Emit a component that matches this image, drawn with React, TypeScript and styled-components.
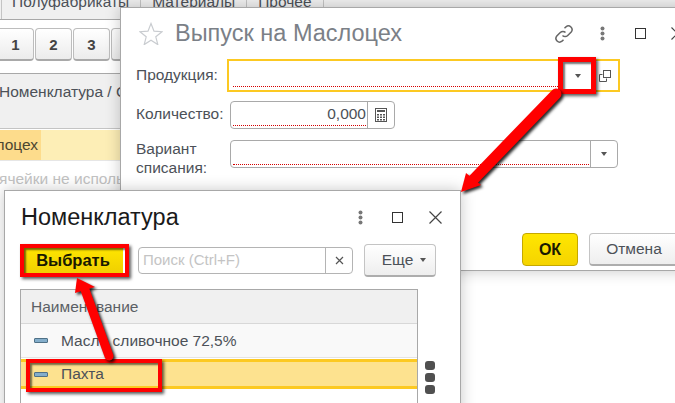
import React from "react";
import styled, { createGlobalStyle } from "styled-components";

const GlobalStyle = createGlobalStyle`
  html, body {
    margin: 0;
    padding: 0;
    background: #fff;
  }
  body {
    font-family: "Liberation Sans", Arial, sans-serif;
    color: #4b4f55;
  }
`;

const Desktop = styled.div`
  position: relative;
  width: 675px;
  height: 403px;
  overflow: hidden;
  background: #fff;
`;

/* background form */
const TabStrip = styled.div`
  display: flex;
  align-items: flex-end;
  height: 19px;
  overflow: hidden;
  background: #f0f0f0;
  border-bottom: 1px solid #a8a8a8;
  padding-left: 1px;
`;

const Tab = styled.div`
  flex: none;
  padding: 0 11px 9px;
  height: 30px;
  border-left: 1px solid #c4c4c4;
  line-height: 17px;
  font-size: 15.5px;
  color: #4c5158;
  box-sizing: border-box;
  display: flex;
  align-items: flex-end;
  &:first-child {
    padding-left: 10px;
  }
`;

const PagerRow = styled.div`
  display: flex;
  gap: 1px;
  margin-top: 8px;
  margin-left: -3px;
`;

const PagerButton = styled.div`
  width: 37px;
  height: 33px;
  box-sizing: border-box;
  display: flex;
  align-items: center;
  justify-content: center;
  border: 1px solid #bdbdbd;
  border-bottom: 2px solid #a9a9a9;
  border-radius: 4px;
  background: linear-gradient(#fff, #ececec);
  font-size: 15px;
  font-weight: bold;
  color: #444;
`;

const ListHead = styled.div`
  margin-top: 12px;
  height: 56px;
  box-sizing: border-box;
  background: #f0f0f0;
  border-top: 1px solid #a8a8a8;
  border-bottom: 1px solid #c4c4c4;
  padding-top: 9px;
  font-size: 15.5px;
  text-indent: -1px;
  white-space: nowrap;
  color: #4c5158;
`;

const ListRow = styled.div`
  margin-top: 1px;
  height: 30px;
  background: #fdeeb6;
  border-bottom: 1px solid #e6e6e6;
`;

const ListCell = styled.div`
  width: 41px;
  height: 30px;
  background: #fddc8c;
  font-size: 15.5px;
  line-height: 29px;
  direction: rtl;
  padding-right: 3px;
  box-sizing: border-box;
  overflow: hidden;
  white-space: nowrap;
  color: #4c4630;
`;

const HintText = styled.div`
  margin-top: 9px;
  margin-left: -1px;
  font-size: 15.5px;
  color: #c2c2c2;
  white-space: nowrap;
`;

/* windows */
const Window = styled.div<{ $left: number; $top: number; $width: number; $height: number }>`
  position: absolute;
  left: ${(p) => p.$left}px;
  top: ${(p) => p.$top}px;
  width: ${(p) => p.$width}px;
  height: ${(p) => p.$height}px;
  box-sizing: border-box;
  display: flex;
  flex-direction: column;
  background: #fff;
  border: 1px solid #a8a8a8;
  box-shadow: 0 0 14px rgba(0, 0, 0, 0.22);
`;

const WindowHeader = styled.div<{ $height: number }>`
  display: flex;
  align-items: center;
  height: ${(p) => p.$height}px;
  flex: none;
`;

const WindowTitle = styled.div<{ $muted?: boolean }>`
  font-size: 23.5px;
  white-space: nowrap;
  color: ${(p) => (p.$muted ? "#7b8087" : "#1a1a1a")};
`;

const TitleSlot = styled.div`
  flex: none;
  margin-left: 12px;
`;

const HeaderIcon = styled.svg<{ $gapLeft: number }>`
  flex: none;
  margin-left: ${(p) => p.$gapLeft}px;
`;

const HeaderSpacer = styled.div`
  flex: 1;
`;

const FormRow = styled.div<{ $top: number }>`
  display: flex;
  align-items: flex-start;
  margin-top: ${(p) => p.$top}px;
  padding-left: 15px;
`;

const FieldLabel = styled.div<{ $width: number; $offset: number }>`
  width: ${(p) => p.$width}px;
  flex: none;
  margin-top: ${(p) => p.$offset}px;
  font-size: 15.5px;
  line-height: 19px;
  color: #4c5158;
  white-space: nowrap;
`;

const FocusField = styled.div`
  width: 393px;
  height: 33px;
  box-sizing: border-box;
  display: flex;
  border: 2px solid #fcc922;
`;

const Field = styled.div<{ $width: number }>`
  width: ${(p) => p.$width}px;
  height: 28px;
  box-sizing: border-box;
  display: flex;
  border: 1px solid #a9a9a9;
  border-radius: 4px;
`;

const FieldValue = styled.div`
  flex: 1;
  display: flex;
  align-items: flex-end;
  justify-content: flex-end;
  padding: 0 1px 2px 2px;
`;

const FocusValue = styled(FieldValue)`
  padding: 0 5px 3px 4px;
`;

const DottedValue = styled.div`
  flex: 1;
  height: 22px;
  box-sizing: border-box;
  border-bottom: 1px dotted #d40000;
  text-align: right;
  font-size: 15.5px;
  line-height: 20px;
  color: #4c5158;
`;

const FieldButton = styled.div`
  width: 26px;
  flex: none;
  display: flex;
  align-items: center;
  justify-content: center;
  border-left: 1px solid #a9a9a9;
`;

const PlainIconBox = styled.div<{ $width: number }>`
  width: ${(p) => p.$width}px;
  flex: none;
  display: flex;
  align-items: center;
  justify-content: center;
`;

const DownTriangle = styled.div`
  width: 0;
  height: 0;
  border-left: 3.5px solid transparent;
  border-right: 3.5px solid transparent;
  border-top: 4px solid #555;
`;

const WindowFooter = styled.div`
  margin-top: auto;
  display: flex;
  gap: 11px;
  padding: 0 0 4px 401px;
`;

const BaseButton = styled.div<{ $width: number }>`
  width: ${(p) => p.$width}px;
  height: 33px;
  flex: none;
  box-sizing: border-box;
  display: flex;
  align-items: center;
  justify-content: center;
  border-radius: 4px;
  font-size: 15.5px;
`;

const PrimaryButton = styled(BaseButton)`
  border: 1px solid #c5a800;
  background: linear-gradient(#ffe600, #f5d400);
  font-weight: bold;
  font-size: 16px;
  color: #1a1a00;
`;

const SecondaryButton = styled(BaseButton)`
  border: 1px solid #c4c4c4;
  border-bottom: 2px solid #adadad;
  background: linear-gradient(#fff, #eeeeee);
  color: #4c5158;
`;

/* selection dialog */
const PickerHeader = styled(WindowHeader)`
  padding-left: 16px;
`;

const PickerBar = styled.div`
  display: flex;
  align-items: flex-start;
  padding-left: 15px;
  height: 45px;
  flex: none;
`;

const PickButton = styled.div`
  width: 103px;
  height: 26px;
  margin-top: 3px;
  box-sizing: border-box;
  display: flex;
  align-items: center;
  justify-content: center;
  background: linear-gradient(#ffe600, #f0d000);
  font-size: 16.5px;
  font-weight: bold;
  color: #1a1a00;
  padding-left: 3px;
`;

const SearchBox = styled.div`
  width: 215px;
  height: 27px;
  margin: 3px 0 0 15px;
  box-sizing: border-box;
  display: flex;
  border: 1px solid #b4b4b4;
  border-radius: 4px;
`;

const SearchInput = styled.div`
  flex: 1;
  padding-left: 4px;
  border-right: 1px solid #b4b4b4;
  font-size: 15px;
  line-height: 24px;
  color: #c4c4c4;
`;

const SearchClear = styled.div`
  width: 26px;
  flex: none;
  display: flex;
  align-items: center;
  justify-content: center;
`;

const MoreButton = styled(SecondaryButton)`
  margin-left: 11px;
  gap: 7px;
  padding-left: 8px;
`;

const TableRowWrap = styled.div`
  display: flex;
  align-items: flex-start;
  padding-left: 15px;
`;

const Table = styled.div`
  width: 398px;
  height: 130px;
  flex: none;
  box-sizing: border-box;
  border: 1px solid #a8a8a8;
`;

const TableHead = styled.div`
  height: 34px;
  box-sizing: border-box;
  padding-left: 10px;
  background: #f0f0f0;
  border-bottom: 1px solid #d8d8d8;
  font-size: 15.5px;
  line-height: 33px;
  color: #5b5f65;
`;

const TableRow = styled.div<{ $selected?: boolean }>`
  height: ${(p) => (p.$selected ? 30 : 34)}px;
  margin-top: ${(p) => (p.$selected ? 1 : 0)}px;
  box-sizing: border-box;
  display: flex;
  align-items: center;
  gap: 13px;
  padding-left: 13px;
  font-size: 15.5px;
  color: #4c5158;
  background: ${(p) => (p.$selected ? "#fde28f" : "#f9f9f9")};
  border-top: ${(p) => (p.$selected ? "3px solid #fcc922" : "none")};
  border-bottom: ${(p) => (p.$selected ? "3px solid #fcc922" : "1px solid #e4e4e4")};
`;

const ItemMark = styled.div`
  width: 14px;
  height: 5px;
  box-sizing: border-box;
  background: #84aecb;
  border: 1px solid #4f7187;
  border-radius: 1px;
`;

const ScrollDots = styled.div`
  display: flex;
  flex-direction: column;
  gap: 3px;
  margin: 72px 0 0 7px;
`;

const ScrollDot = styled.div`
  width: 10px;
  height: 9px;
  border-radius: 3px;
  background: #505050;
`;

/* red annotations over the screenshot */
const Frame = styled.div<{ $x: number; $y: number; $w: number; $h: number; $b: number }>`
  position: absolute;
  left: ${(p) => p.$x}px;
  top: ${(p) => p.$y}px;
  width: ${(p) => p.$w}px;
  height: ${(p) => p.$h}px;
  box-sizing: border-box;
  border: ${(p) => p.$b}px solid #ff0000;
  box-shadow: 2px 2px 3px rgba(0, 0, 0, 0.65), inset 2px 2px 2px rgba(0, 0, 0, 0.55);
`;

const ArrowLayer = styled.svg`
  position: absolute;
  left: 0;
  top: 0;
  filter: drop-shadow(2px 2px 1.5px rgba(0, 0, 0, 0.85));
`;

const Calculator = () => (
  <svg width="12" height="14" viewBox="0 0 12 14">
    <rect x="0.5" y="0.5" width="11" height="13" fill="none" stroke="#555" />
    <rect x="2" y="2" width="8" height="2" fill="#555" />
    <path d="M2 6h2v1.5H2zM5 6h2v1.5H5zM8 6h2v1.5H8zM2 8.5h2V10H2zM5 8.5h2V10H5zM8 8.5h2V10H8zM2 11h2v1.5H2zM5 11h2v1.5H5zM8 11h2v1.5H8z" fill="#555" />
  </svg>
);

const Kebab = ({ gap }: { gap: number }) => (
  <HeaderIcon $gapLeft={gap} width="5" height="15" viewBox="0 0 5 15">
    <circle cx="2.5" cy="2.5" r="2" fill="#777" />
    <circle cx="2.5" cy="7.5" r="2" fill="#777" />
    <circle cx="2.5" cy="12.5" r="2" fill="#777" />
  </HeaderIcon>
);

const Maximize = ({ gap }: { gap: number }) => (
  <HeaderIcon $gapLeft={gap} width="11" height="11" viewBox="0 0 11 11">
    <rect x="0.5" y="0.5" width="10" height="10" fill="none" stroke="#333" />
  </HeaderIcon>
);

const CloseCross = ({ gap }: { gap: number }) => (
  <HeaderIcon $gapLeft={gap} width="13" height="13" viewBox="0 0 13 13">
    <path d="M0.5 0.5l12 12M12.5 0.5l-12 12" stroke="#444" strokeWidth="1.2" fill="none" />
  </HeaderIcon>
);

const App = () => {
  return (
    <Desktop>
      <GlobalStyle />

      <TabStrip>
        <Tab>Полуфабрикаты</Tab>
        <Tab>Материалы</Tab>
        <Tab>Прочее</Tab>
        <Tab />
      </TabStrip>
      <PagerRow>
        <PagerButton>1</PagerButton>
        <PagerButton>2</PagerButton>
        <PagerButton>3</PagerButton>
        <PagerButton>4</PagerButton>
      </PagerRow>
      <ListHead>Номенклатура / Спецификация</ListHead>
      <ListRow>
        <ListCell>Маслоцех</ListCell>
      </ListRow>
      <HintText>ячейки не используются</HintText>

      <Window $left={120} $top={7} $width={600} $height={264}>
        <WindowHeader $height={51}>
          <HeaderIcon $gapLeft={18} width="24" height="23" viewBox="0 0 24 23">
            <path
              d="M12 1.5l3 7.6 8 .6-6.2 5.1 2 7.8L12 18.3l-6.8 4.3 2-7.8L1 9.7l8-.6z"
              fill="none"
              stroke="#c9ccd0"
              strokeWidth="1.2"
            />
          </HeaderIcon>
          <TitleSlot>
            <WindowTitle $muted>Выпуск на Маслоцех</WindowTitle>
          </TitleSlot>
          <HeaderSpacer />
          <HeaderIcon $gapLeft={0} width="20" height="20" viewBox="0 0 20 20">
            <path
              d="M8.5 11.5a3.6 3.6 0 0 0 5.2 0l3.5-3.5a3.7 3.7 0 0 0-5.2-5.2L10.5 4.3M11.5 8.5a3.6 3.6 0 0 0-5.2 0l-3.5 3.5a3.7 3.7 0 0 0 5.2 5.2l1.5-1.5"
              fill="none"
              stroke="#666"
              strokeWidth="1.5"
            />
          </HeaderIcon>
          <Kebab gap={26} />
          <Maximize gap={30} />
          <CloseCross gap={25} />
          <PlainIconBox $width={35} />
        </WindowHeader>

        <FormRow $top={0}>
          <FieldLabel $width={91} $offset={6}>Продукция:</FieldLabel>
          <FocusField>
            <FocusValue>
              <DottedValue />
            </FocusValue>
            <PlainIconBox $width={29}>
              <DownTriangle />
            </PlainIconBox>
            <PlainIconBox $width={26}>
              <svg width="12" height="12" viewBox="0 0 12 12">
                <path d="M3.5 4.5H.5v7h7V8.5" fill="none" stroke="#555" />
                <rect x="4.5" y="0.5" width="7" height="7" fill="none" stroke="#555" />
              </svg>
            </PlainIconBox>
          </FocusField>
        </FormRow>

        <FormRow $top={9}>
          <FieldLabel $width={94} $offset={3}>Количество:</FieldLabel>
          <Field $width={165}>
            <FieldValue>
              <DottedValue>0,000</DottedValue>
            </FieldValue>
            <FieldButton>
              <Calculator />
            </FieldButton>
          </Field>
        </FormRow>

        <FormRow $top={11}>
          <FieldLabel $width={94} $offset={-1}>
            Вариант
            <br />
            списания:
          </FieldLabel>
          <Field $width={388}>
            <FieldValue>
              <DottedValue />
            </FieldValue>
            <FieldButton>
              <DownTriangle />
            </FieldButton>
          </Field>
        </FormRow>

        <WindowFooter>
          <PrimaryButton $width={56}>ОК</PrimaryButton>
          <SecondaryButton $width={90}>Отмена</SecondaryButton>
        </WindowFooter>
      </Window>

      <Window $left={4} $top={190} $width={457} $height={240}>
        <PickerHeader $height={53}>
          <WindowTitle>Номенклатура</WindowTitle>
          <HeaderSpacer />
          <Kebab gap={0} />
          <Maximize gap={29} />
          <CloseCross gap={26} />
          <PlainIconBox $width={18} />
        </PickerHeader>

        <PickerBar>
          <PickButton>Выбрать</PickButton>
          <SearchBox>
            <SearchInput>Поиск (Ctrl+F)</SearchInput>
            <SearchClear>
              <svg width="9" height="9" viewBox="0 0 9 9">
                <path d="M1 1l7 7M8 1l-7 7" stroke="#555" strokeWidth="1.2" fill="none" />
              </svg>
            </SearchClear>
          </SearchBox>
          <MoreButton $width={72}>
            Еще
            <DownTriangle />
          </MoreButton>
        </PickerBar>

        <TableRowWrap>
          <Table>
            <TableHead>Наименование</TableHead>
            <TableRow>
              <ItemMark />
              Масло сливочное 72,5%
            </TableRow>
            <TableRow $selected>
              <ItemMark />
              Пахта
            </TableRow>
          </Table>
          <ScrollDots>
            <ScrollDot />
            <ScrollDot />
            <ScrollDot />
          </ScrollDots>
        </TableRowWrap>
      </Window>

      <Frame $x={558} $y={57} $w={38} $h={37} $b={5} />
      <Frame $x={20} $y={244} $w={109} $h={33} $b={4} />
      <Frame $x={26} $y={359} $w={136} $h={33} $b={4} />

      <ArrowLayer width="675" height="403" viewBox="0 0 675 403">
        <line x1="556" y1="94" x2="472" y2="181" stroke="#ff0000" strokeWidth="11" strokeLinecap="round" />
        <polygon points="461,192 466,173 481,185" fill="#ff0000" />
        <line x1="109" y1="356" x2="84" y2="287" stroke="#ff0000" strokeWidth="9" strokeLinecap="round" />
        <polygon points="77,278 75,293 95,287" fill="#ff0000" />
      </ArrowLayer>
    </Desktop>
  );
};

export default App;
